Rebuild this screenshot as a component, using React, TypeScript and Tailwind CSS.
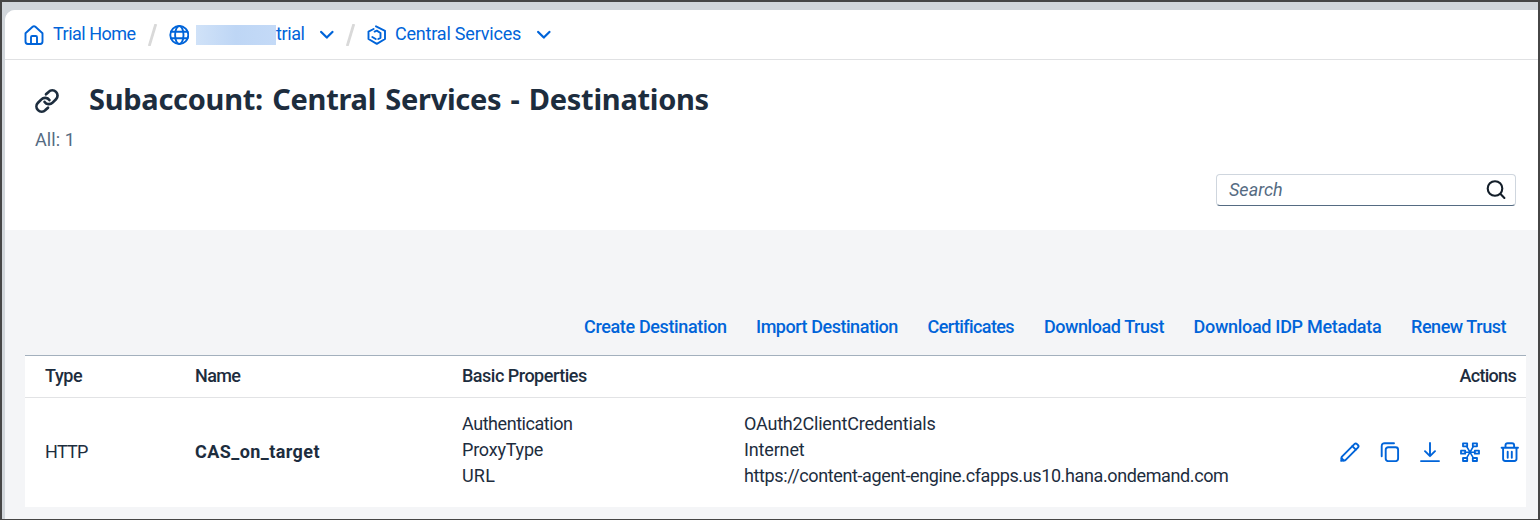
import type { ReactNode } from "react";

function Icon({ size = 20, sw = 2, className = "", children }: { size?: number; sw?: number; className?: string; children: ReactNode }) {
  return (
    <svg width={size} height={size} viewBox={`0 0 ${size} ${size}`} fill="none" stroke="currentColor" strokeWidth={sw} strokeLinecap="round" strokeLinejoin="round" className={`block shrink-0 ${className}`}>
      {children}
    </svg>
  );
}

const HomeIcon = () => (
  <Icon sw={1.9} className="ml-[19px]">
    <path d="M1.5 8.2 8.6 1.8Q10 .6 11.4 1.8L18.5 8.2V16.6Q18.5 19 16.2 19H3.8Q1.5 19 1.5 16.6Z" />
    <path d="M7 19v-6.8Q7 11 8.2 11h3.6Q13 11 13 12.2V19" />
  </Icon>
);

const GlobeIcon = () => (
  <Icon sw={1.9}>
    <circle cx="10.3" cy="10" r="9" />
    <ellipse cx="10.3" cy="10" rx="4.2" ry="9" />
    <path d="M2 6.8h16.6M2 13.2h16.6" />
  </Icon>
);

const HexIcon = () => (
  <Icon sw={1.9}>
    <path d="M9 1.3 18 5.8V14L9.8 18.9 1.5 14V6.6L6.6 4" />
    <path d="M7.6 6.6 9.8 5.6 13.5 8v4.8L11.3 14" />
    <path d="M5.3 12 8.7 14" />
  </Icon>
);

const Chevron = ({ className = "" }: { className?: string }) => (
  <Icon size={14} sw={2.2} className={className}>
    <path d="M1.2 3.9 6.8 9.6 12.4 3.9" />
  </Icon>
);

const Slash = ({ className = "" }: { className?: string }) => (
  <svg width="10" height="22" viewBox="0 0 10 22" className={`block shrink-0 ${className}`}>
    <path d="M7.8 0 1.2 22" stroke="#d9d9d9" strokeWidth="2.8" />
  </svg>
);

const commands = [
  { label: "Create Destination", cls: "w-[142.5px] tracking-[-0.36px]" },
  { label: "Import Destination", cls: "w-[142px] tracking-[-0.46px]" },
  { label: "Certificates", cls: "w-[87px] tracking-[-0.6px]" },
  { label: "Download Trust", cls: "w-[120px] tracking-[-0.43px]" },
  { label: "Download IDP Metadata", cls: "w-[188px] tracking-[-0.29px]" },
  { label: "Renew Trust", cls: "w-[95px] tracking-[-0.45px]" },
];

const properties = [
  { name: "Authentication", value: "OAuth2ClientCredentials", nameCls: "tracking-[-0.45px]", valueCls: "tracking-[-0.2px]" },
  { name: "ProxyType", value: "Internet", nameCls: "tracking-[-0.22px]", valueCls: "tracking-[-0.15px]" },
  { name: "URL", value: "https://content-agent-engine.cfapps.us10.hana.ondemand.com", nameCls: "tracking-[0.2px]", valueCls: "tracking-[-0.38px]" },
];

function Breadcrumbs() {
  return (
    <nav className="flex h-[50px] items-center border-b border-[#e0e1e3] text-[18px] text-[#0064d9]">
      <HomeIcon />
      <a className="ml-[9px] w-[83px] pb-[2px] tracking-[-0.5px]">Trial Home</a>
      <Slash className="ml-[12px]" />
      <span className="ml-[11px]"><GlobeIcon /></span>
      <span className="ml-[7px] h-5 w-[80px] bg-linear-to-r from-[#d0e2f8] via-[#bed6f5] to-[#c4daf7]" />
      <a className="w-[29px] pb-[2px] tracking-[-0.4px]">trial</a>
      <Chevron className="ml-[15px]" />
      <Slash className="ml-[12px]" />
      <span className="ml-[11px]"><HexIcon /></span>
      <a className="ml-[8px] w-[127px] pb-[2px] tracking-[-0.2px]">Central Services</a>
      <Chevron className="ml-[15px]" />
    </nav>
  );
}

function RowActions() {
  return (
    <div className="mb-[2px] flex w-[186px] items-center gap-5 self-center text-[#0064d9]">
      <Icon sw={1.9}>
        <path d="M1.2 18.8 1.7 14.8 14.4 2.1Q15.7.8 17 2.1l.9.9q1.3 1.3 0 2.6L5.2 18.3Z" />
        <path d="m12.3 4.2 3.5 3.5" />
        <path d="M1.5 16.2 3.8 18.5" />
      </Icon>
      <Icon sw={1.9}>
        <rect x="5.7" y="5.3" width="12.4" height="13.8" rx="2.5" />
        <path d="M1.7 14.3V4.2Q1.7 1.2 4.7 1.2h9.3" />
      </Icon>
      <Icon sw={1.9}>
        <path d="M10 1v13M5 9.2l5 5 5-5M1 19.1h18" />
      </Icon>
      <Icon sw={1.8}>
        <path d="M3 1.3h4.2v3H3zM12.8 1.3H17v3h-4.2zM1 8.7h4.2v3H1zM14.8 8.7H19v3h-4.2zM3 16h4.2v3H3zM12.8 16H17v3h-4.2z" />
        <path d="M5.2 10.2h9.6M6.7 4.5l6.6 11.4M13.3 4.5 6.7 15.9" strokeWidth="1.5" />
      </Icon>
      <Icon sw={1.9}>
        <path d="M1.6 5.8h16.4M3.1 6v10.8Q3.1 19 5.3 19h9q2.2 0 2.2-2.2V6M5.5 5.5V3.3Q5.5 1.2 7.6 1.2h4.4q2.1 0 2.1 2.1v2.2M7.7 9.8v6M11.8 9.8v6" />
      </Icon>
    </div>
  );
}

export default function App() {
  return (
    <div className="h-[520px] w-[1540px] overflow-hidden border-2 border-b-1 border-[#464646] bg-[#d1d6db] pt-2 pl-[3px] font-['Roboto',sans-serif] whitespace-nowrap text-[#1d2d3e]">
      <main className="flex h-full flex-col overflow-hidden rounded-tl-[10px] bg-[#f4f5f7]">
        <div className="h-[220px] shrink-0 bg-white">
          <Breadcrumbs />
          <header className="pt-5 pl-[30px]">
            <div className="flex h-10 items-center">
              <Icon size={24} sw={2.7} className="mt-[2px]">
                <path d="M11 5.3 13.6 2.9a5.2 5.2 0 0 1 7.4 7.4L17.6 13.6a5.2 5.2 0 0 1-8-.7" />
                <path d="m13 18.7-2.6 2.4A5.2 5.2 0 0 1 3 13.7l3.4-3.3a5.2 5.2 0 0 1 8 .7" />
              </Icon>
              <h1 className="ml-[30px] pb-[2px] font-['Noto_Sans',sans-serif] text-[29px] font-bold tracking-[-0.28px] [word-spacing:2px]">Subaccount: Central Services - Destinations</h1>
            </div>
            <div className="h-10 text-[18px] leading-10 tracking-[0.1px] text-[#556b82]">All: 1</div>
          </header>
          <div className="mt-[14px] mr-[22px] ml-auto flex h-8 w-[300px] items-center justify-between rounded border border-[#cfd6de] border-b-[#556b82] pr-[9px] pl-3 text-[18px] text-[#556b82] italic">
            <span className="pb-[2px]">Search</span>
            <Icon sw={2.1} className="text-[#131e29]">
              <circle cx="9" cy="8.5" r="7.3" />
              <path d="m14.3 13.8 4.1 4.1" />
            </Icon>
          </div>
        </div>
        <section className="pt-[76px] pl-5">
          <div className="flex h-[49px] justify-end gap-[29.5px] pr-[32px] text-[18px] leading-[41px] font-medium text-[#0064d9]">
            {commands.map((c) => (
              <a key={c.label} className={c.cls}>{c.label}</a>
            ))}
          </div>
          <div className="w-[1501px] bg-white text-[18px]">
            <div className="flex h-[43px] items-center border-t border-b border-t-[#a3b0bd] border-b-[#e2e3e5] pb-[2px] pl-5 font-medium">
              <span className="w-[150px] tracking-[-0.4px]">Type</span>
              <span className="w-[267px] tracking-[-0.6px]">Name</span>
              <span className="tracking-[-0.5px]">Basic Properties</span>
              <span className="mr-[10px] ml-auto tracking-[-0.7px]">Actions</span>
            </div>
            <div className="flex h-[109px] items-center pl-5">
              <span className="w-[150px] pb-[2px] tracking-[-0.7px]">HTTP</span>
              <span className="w-[267px] pb-[2px] font-bold tracking-[0.42px]">CAS_on_target</span>
              <div className="grid w-[878px] grid-cols-[282px_1fr] pb-[6px] leading-[26px]">
                {properties.map((p) => (
                  <div key={p.name} className="contents">
                    <span className={p.nameCls}>{p.name}</span>
                    <span className={p.valueCls}>{p.value}</span>
                  </div>
                ))}
              </div>
              <RowActions />
            </div>
          </div>
        </section>
      </main>
    </div>
  );
}
